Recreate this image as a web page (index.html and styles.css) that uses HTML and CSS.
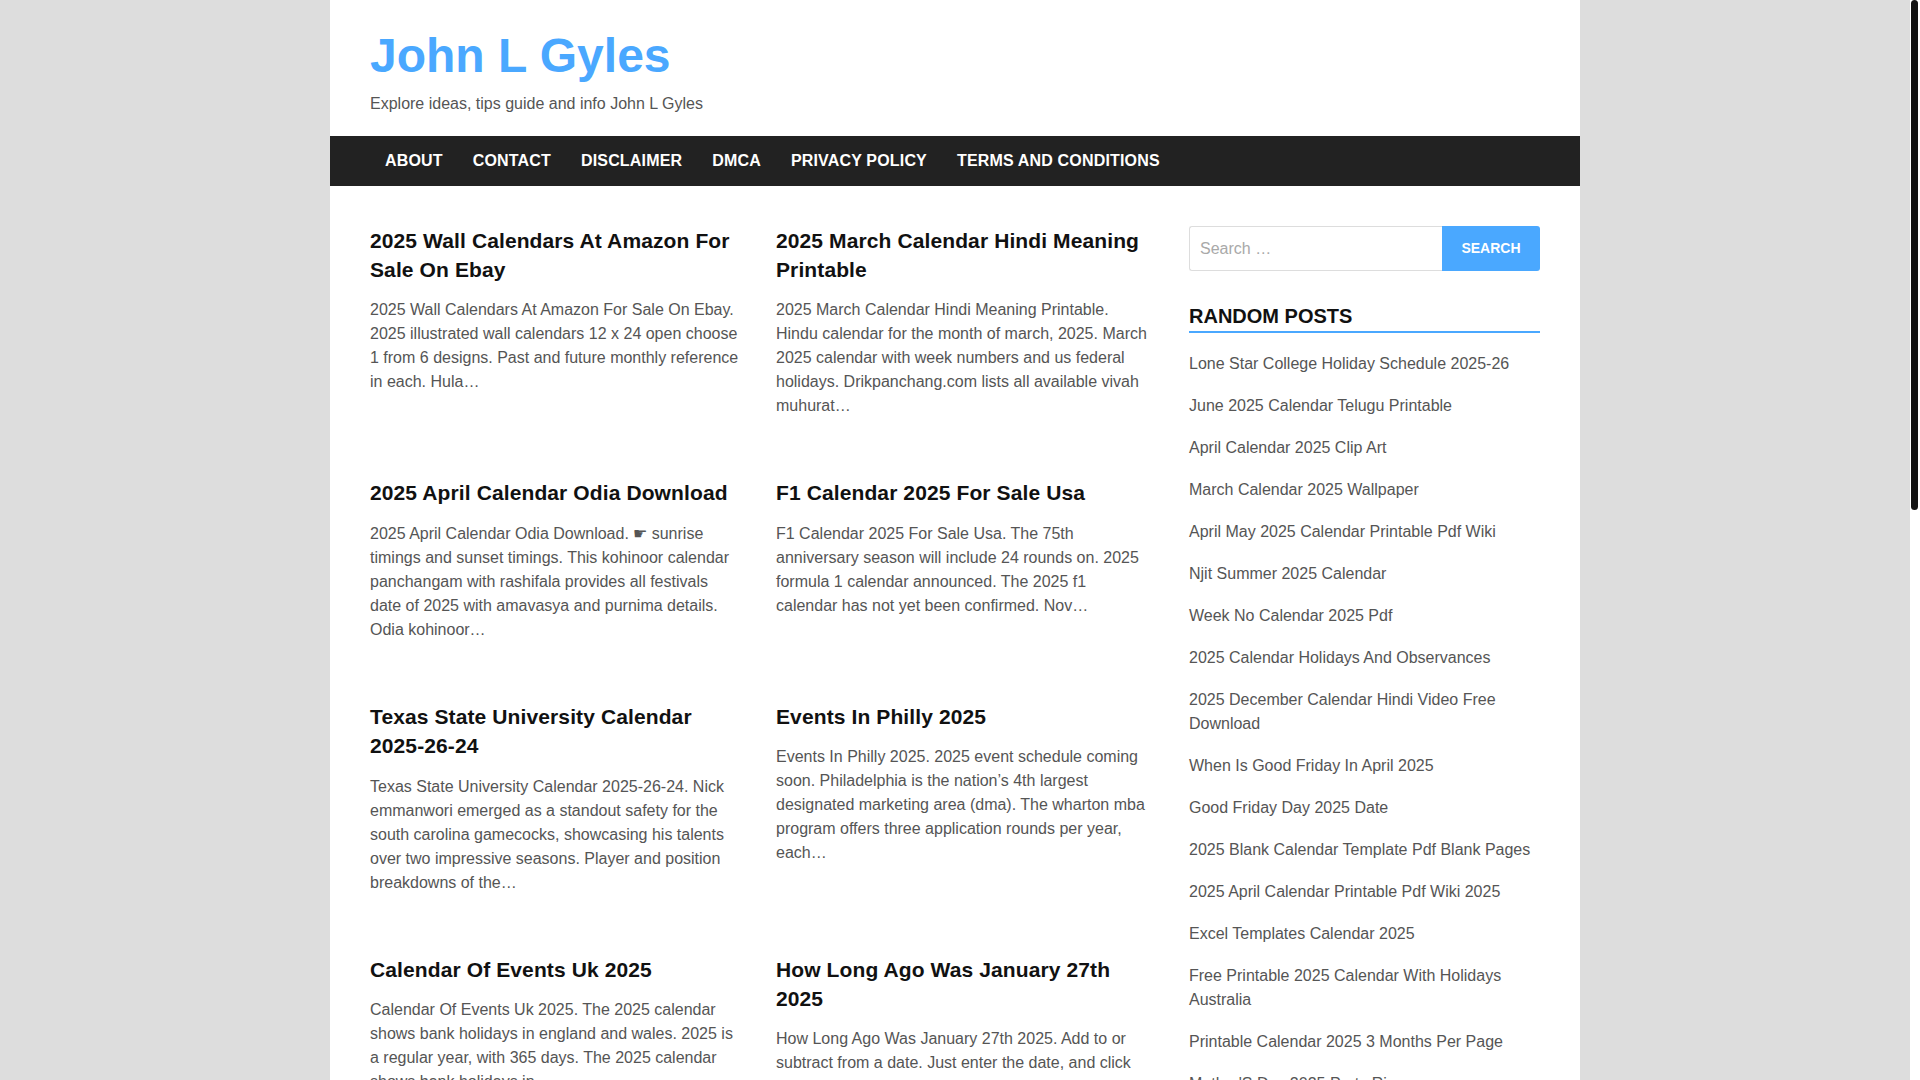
FILE: index.html
```html
<!DOCTYPE html>
<html lang="en">
<head>
<meta charset="utf-8">
<title>John L Gyles - Explore ideas, tips guide and info John L Gyles</title>
<link rel="stylesheet" href="styles.css">
</head>
<body>
<div class="site">
  <header class="header">
    <h1 class="site-title"><a href="#">John L Gyles</a></h1>
    <p class="tagline">Explore ideas, tips guide and info John L Gyles</p>
  </header>
  <nav class="nav">
    <ul class="menu">
      <li><a href="#">About</a></li>
      <li><a href="#">Contact</a></li>
      <li><a href="#">Disclaimer</a></li>
      <li><a href="#">DMCA</a></li>
      <li><a href="#">Privacy Policy</a></li>
      <li><a href="#">Terms and Conditions</a></li>
    </ul>
  </nav>
  <div class="content">
    <main class="posts">
      <article class="post">
        <h2 class="post-title"><a href="#">2025 Wall Calendars At Amazon For Sale On Ebay</a></h2>
        <p class="excerpt">2025 Wall Calendars At Amazon For Sale On Ebay. 2025 illustrated wall calendars 12 x 24 open choose 1 from 6 designs. Past and future monthly reference in each. Hula…</p>
      </article>
      <article class="post">
        <h2 class="post-title"><a href="#">2025 March Calendar Hindi Meaning Printable</a></h2>
        <p class="excerpt">2025 March Calendar Hindi Meaning Printable. Hindu calendar for the month of march, 2025. March 2025 calendar with week numbers and us federal holidays. Drikpanchang.com lists all available vivah muhurat…</p>
      </article>
      <article class="post">
        <h2 class="post-title"><a href="#">2025 April Calendar Odia Download</a></h2>
        <p class="excerpt">2025 April Calendar Odia Download. ☛ sunrise timings and sunset timings. This kohinoor calendar panchangam with rashifala provides all festivals date of 2025 with amavasya and purnima details. Odia kohinoor…</p>
      </article>
      <article class="post">
        <h2 class="post-title"><a href="#">F1 Calendar 2025 For Sale Usa</a></h2>
        <p class="excerpt">F1 Calendar 2025 For Sale Usa. The 75th anniversary season will include 24 rounds on. 2025 formula 1 calendar announced. The 2025 f1 calendar has not yet been confirmed. Nov…</p>
      </article>
      <article class="post">
        <h2 class="post-title"><a href="#">Texas State University Calendar 2025-26-24</a></h2>
        <p class="excerpt">Texas State University Calendar 2025-26-24. Nick emmanwori emerged as a standout safety for the south carolina gamecocks, showcasing his talents over two impressive seasons. Player and position breakdowns of the…</p>
      </article>
      <article class="post">
        <h2 class="post-title"><a href="#">Events In Philly 2025</a></h2>
        <p class="excerpt">Events In Philly 2025. 2025 event schedule coming soon. Philadelphia is the nation’s 4th largest designated marketing area (dma). The wharton mba program offers three application rounds per year, each…</p>
      </article>
      <article class="post">
        <h2 class="post-title"><a href="#">Calendar Of Events Uk 2025</a></h2>
        <p class="excerpt">Calendar Of Events Uk 2025. The 2025 calendar shows bank holidays in england and wales. 2025 is a regular year, with 365 days. The 2025 calendar shows bank holidays in…</p>
      </article>
      <article class="post">
        <h2 class="post-title"><a href="#">How Long Ago Was January 27th 2025</a></h2>
        <p class="excerpt">How Long Ago Was January 27th 2025. Add to or subtract from a date. Just enter the date, and click calculate to find out how many days, weeks or months have passed since…</p>
      </article>
      <article class="post">
        <h2 class="post-title"><a href="#">Printable 2025 Monthly Calendar Free</a></h2>
        <p class="excerpt">Printable 2025 Monthly Calendar Free. Download a free printable monthly calendar for 2025 with holidays. All calendars are blank and available in pdf, word and excel formats. Each…</p>
      </article>
      <article class="post">
        <h2 class="post-title"><a href="#">2025 Calendar With Holidays Uk</a></h2>
        <p class="excerpt">2025 Calendar With Holidays Uk. The year 2025 has 8 public holidays in england and wales. The calendar includes week numbers and bank holidays for the whole year. Scotland…</p>
      </article>
      <div class="pagination"><span class="current">1</span><a href="#">2</a><a href="#">3</a><span class="dots">…</span><a href="#">120</a><a href="#">Next</a></div>
    </main>
    <aside class="sidebar">
      <form class="search" action="#">
        <input class="search-field" type="search" placeholder="Search …">
        <button class="search-btn" type="button">Search</button>
      </form>
      <section class="widget">
        <h3 class="widget-title">Random Posts</h3>
        <ul class="widget-list">
          <li><a href="#">Lone Star College Holiday Schedule 2025-26</a></li>
          <li><a href="#">June 2025 Calendar Telugu Printable</a></li>
          <li><a href="#">April Calendar 2025 Clip Art</a></li>
          <li><a href="#">March Calendar 2025 Wallpaper</a></li>
          <li><a href="#">April May 2025 Calendar Printable Pdf Wiki</a></li>
          <li><a href="#">Njit Summer 2025 Calendar</a></li>
          <li><a href="#">Week No Calendar 2025 Pdf</a></li>
          <li><a href="#">2025 Calendar Holidays And Observances</a></li>
          <li><a href="#">2025 December Calendar Hindi Video Free Download</a></li>
          <li><a href="#">When Is Good Friday In April 2025</a></li>
          <li><a href="#">Good Friday Day 2025 Date</a></li>
          <li><a href="#">2025 Blank Calendar Template Pdf Blank Pages</a></li>
          <li><a href="#">2025 April Calendar Printable Pdf Wiki 2025</a></li>
          <li><a href="#">Excel Templates Calendar 2025</a></li>
          <li><a href="#">Free Printable 2025 Calendar With Holidays Australia</a></li>
          <li><a href="#">Printable Calendar 2025 3 Months Per Page</a></li>
          <li><a href="#">Mother'S Day 2025 Party Rio</a></li>
          <li><a href="#">Bank Holidays Calendar 2025 Uk</a></li>
          <li><a href="#">2025 Calendar Printable Free Monthly</a></li>
          <li><a href="#">Easter Sunday 2025 Date Calendar</a></li>
        </ul>
      </section>
      <section class="widget">
        <h3 class="widget-title">Recent Posts</h3>
        <ul class="widget-list">
          <li><a href="#">2025 Wall Calendars At Amazon For Sale On Ebay</a></li>
          <li><a href="#">2025 March Calendar Hindi Meaning Printable</a></li>
          <li><a href="#">2025 April Calendar Odia Download</a></li>
          <li><a href="#">F1 Calendar 2025 For Sale Usa</a></li>
          <li><a href="#">Texas State University Calendar 2025-26-24</a></li>
        </ul>
      </section>
    </aside>
  </div>
  <footer class="footer">
    <p>Copyright © 2025 John L Gyles. All rights reserved.</p>
  </footer>
</div>
<div class="scrollbar" aria-hidden="true"><div class="scrollbar-thumb"></div></div>
</body>
</html>
```
FILE: styles.css
```css
html { background: #dddddd; }
body {
  margin: 0;
  padding-right: 10px;
  background: #dddddd;
  font-family: "Liberation Sans", Arial, Helvetica, sans-serif;
  color: #555555;
}

a { text-decoration: none; color: inherit; }

.scrollbar {
  position: fixed;
  top: 0;
  right: 0;
  width: 10px;
  height: 100vh;
  background: #ffffff;
}
.scrollbar-thumb {
  margin: 0 2px 0 1px;
  height: 510px;
  background: #111111;
  border-radius: 4px;
}

.site {
  width: 1250px;
  margin: 0 auto;
  background: #ffffff;
}

.header { padding: 27px 40px 20px; }
.site-title {
  margin: 0 0 7px;
  font-size: 48px;
  line-height: 1.2;
  font-weight: 700;
  color: #4aa8ff;
}
.tagline {
  margin: 0;
  font-size: 16px;
  line-height: 24px;
  color: #555555;
}

.nav { background: #222222; padding: 0 40px; }
.menu { list-style: none; margin: 0; padding: 0; display: flex; }
.menu a {
  display: block;
  padding: 0 15px;
  line-height: 50px;
  font-size: 16px;
  font-weight: 700;
  letter-spacing: 0.17px;
  color: #ffffff;
  text-transform: uppercase;
}

.content {
  display: flex;
  justify-content: space-between;
  padding: 40px 40px 40px;
}

.posts {
  width: 778px;
  display: grid;
  grid-template-columns: 372px 372px;
  column-gap: 34px;
  row-gap: 60px;
  align-content: start;
}
.post-title {
  margin: 0 0 14px;
  font-size: 21px;
  line-height: 1.4;
  font-weight: 700;
  letter-spacing: 0.11px;
  color: #111111;
}
.excerpt {
  margin: 0;
  font-size: 16px;
  line-height: 24px;
  color: #555555;
}

.pagination {
  grid-column: 1 / -1;
  display: flex;
  gap: 6px;
  font-size: 16px;
}
.pagination a, .pagination span {
  padding: 8px 14px;
  border: 1px solid #dddddd;
  color: #555555;
}
.pagination .current { background: #4aa8ff; border-color: #4aa8ff; color: #ffffff; }
.pagination .dots { border: 0; }

.sidebar { width: 351px; }
.search { display: flex; height: 45px; }
.search-field {
  flex: 1;
  min-width: 0;
  box-sizing: border-box;
  height: 45px;
  margin: 0;
  padding: 1px 10px 0;
  border: 1px solid #dddddd;
  border-right: 0;
  border-radius: 3px 0 0 3px;
  font-family: "Liberation Sans", Arial, sans-serif;
  font-size: 16px;
  color: #555555;
  outline: none;
}
.search-field::placeholder { color: #a9a9a9; }
.search-btn {
  width: 98px;
  height: 45px;
  margin: 0;
  padding: 0;
  border: 0;
  border-radius: 0 3px 3px 0;
  background: #4aa8ff;
  color: #ffffff;
  font-family: "Liberation Sans", Arial, sans-serif;
  font-size: 14px;
  font-weight: 700;
  text-transform: uppercase;
}

.widget { margin-top: 32px; }
.widget-title {
  margin: 0;
  padding-bottom: 2px;
  border-bottom: 2px solid #4aa8ff;
  font-size: 20px;
  line-height: 26px;
  font-weight: 700;
  color: #111111;
  text-transform: uppercase;
}
.widget-list { list-style: none; margin: 19px 0 0; padding: 0; }
.widget-list li {
  margin: 0 0 18px;
  font-size: 16px;
  line-height: 24px;
  color: #555555;
}

.footer {
  background: #222222;
  color: #bbbbbb;
  padding: 20px 40px;
  font-size: 14px;
}
.footer p { margin: 0; }
```
